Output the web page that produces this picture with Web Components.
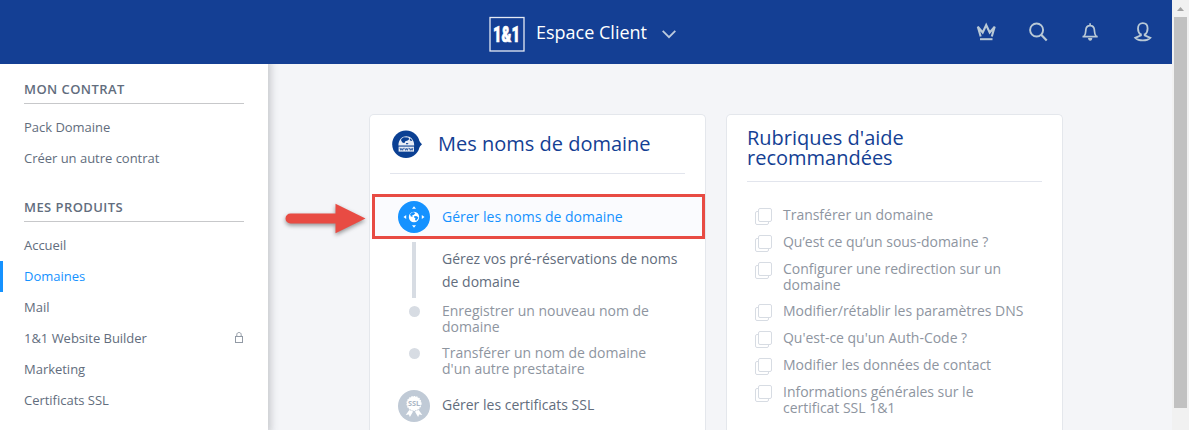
<!DOCTYPE html>
<html lang="fr">
<head>
<meta charset="utf-8">
<title>Espace Client</title>
<style>
html,body{margin:0;height:100%;overflow:hidden}
body{font-family:"Open Sans","Noto Sans",sans-serif;font-size:14px;color:#626d7d;background:#f4f5f8}
</style>
</head>
<body>
<client-app></client-app>
<script>
const define = (name, html) => customElements.define(name, class extends HTMLElement {
  constructor() {
    super();
    const t = document.createElement('template');
    t.innerHTML = html;
    this.attachShadow({ mode: 'open' }).appendChild(t.content.cloneNode(true));
  }
});

define('top-bar', `<style>
:host{display:grid;grid-template-columns:489px 1fr auto;align-items:center;height:64px;background:#143f94;color:#fff;box-sizing:border-box;padding-right:20px}
.brand{grid-column:2;display:flex;align-items:center;font-size:18px;line-height:24px}
.brand svg{display:block;overflow:visible}
.name{margin:0 15px 0 11px;white-space:nowrap}
.chev{margin-top:3px}
.tools{display:flex;gap:32px}
.tools svg{display:block;fill:none;stroke:#b9c9d6;stroke-width:1.9}
</style>
<div class="brand">
<svg width="36" height="38" viewBox="0 0 36 38"><rect x="1" y="4.500" width="34" height="33.500" fill="none" stroke="#e4e9f3" stroke-width="1.300"/><text x="4" y="28.500" style="font-family:Roboto,sans-serif;font-weight:900;font-size:21.500px" textLength="27" lengthAdjust="spacingAndGlyphs" fill="#fff" stroke="#fff" stroke-width=".7">1&amp;1</text></svg>
<span class="name">Espace Client</span>
<svg class="chev" width="14" height="10" viewBox="0 0 14 10" fill="none" stroke="#bccadd" stroke-width="1.800"><path d="M.7 1.800 7 8.200l6.300-6.400"/></svg>
</div>
<div class="tools">
<svg width="20" height="20" viewBox="0 0 20 20"><path d="M4.700 14.500 1.800 4.700 6.700 10.500 10.200 3l3.500 7.500 5-5.800-2.900 9.800" stroke-width="2.100"/><path d="M4 17.200h12.500" stroke-width="2"/></svg>
<svg width="20" height="20" viewBox="0 0 20 20"><circle cx="8.600" cy="8" r="6.500"/><path d="m13.200 12.700 5.500 5.700" stroke-width="2.200"/></svg>
<svg width="20" height="20" viewBox="0 0 20 20"><path d="M2.500 14.600h15.200M4 14.400c1.800-1.900 1.700-4 1.800-6.300.2-3 1.700-4.500 4.300-4.500s4.100 1.500 4.300 4.500c.1 2.300 0 4.400 1.800 6.300M10.100 3.500V1.200" stroke-width="1.700"/><path d="M8 16h4.300c0 1.600-.8 2.700-2.100 2.700S8 17.600 8 16Z" fill="#b9c9d6" stroke="none"/></svg>
<svg width="20" height="20" viewBox="-.8 0 20 20"><path d="M8.100 12.800C6 11.200 5.200 8.700 5.200 6.400c0-3.400 1.800-5.200 4.800-5.200s4.800 1.800 4.800 5.200c0 2.300-.8 4.800-2.900 6.400M8.100 11.500v1.900L2.500 15.800c1.700 1.700 4.500 2.600 7.500 2.600s5.800-.9 7.500-2.600l-5.600-2.400v-1.900" stroke-width="1.800"/></svg>
</div>`);

define('side-group', `<style>
:host{display:block;margin-bottom:25px}
h2{margin:0 24px 8px;height:23px;box-sizing:border-box;border-bottom:1px solid #c7c8ca;font-size:13px;line-height:17px;font-weight:600;letter-spacing:.43px;color:#626d7d;white-space:nowrap}
</style><h2><slot name="title"></slot></h2><slot></slot>`);

define('side-link', `<style>
:host{display:flex;align-items:center;justify-content:space-between;height:31px;box-sizing:border-box;padding:0 25px 2px 24px;font-size:13px;line-height:18px;letter-spacing:-.02px;white-space:nowrap}
:host([active]){color:#1592ff;border-left:3px solid #1592ff;padding-left:21px}
</style><span><slot></slot></span><slot name="icon"></slot>`);

define('side-nav', `<style>
:host{display:block;box-sizing:border-box;width:268px;height:366px;padding-top:17px;background:#fff;position:relative;box-shadow:0 0 7px 3px rgba(70,75,85,.25);clip-path:inset(0 -12px 0 0)}
</style>
<side-group><span slot="title">MON CONTRAT</span><side-link>Pack Domaine</side-link><side-link>Créer un autre contrat</side-link></side-group>
<side-group><span slot="title">MES PRODUITS</span><side-link>Accueil</side-link><side-link active>Domaines</side-link><side-link>Mail</side-link>
<side-link>1&amp;1 Website Builder<svg slot="icon" width="8" height="11" viewBox="0 0 8 11" fill="none" stroke="#929aa5"><rect x=".5" y="4.500" width="7" height="6"/><path d="M1.800 4.500V2.600c0-2.800 4.400-2.800 4.400 0v1.900"/></svg></side-link>
<side-link>Marketing</side-link><side-link>Certificats SSL</side-link></side-group>`);

define('content-card', `<style>
:host{display:block;box-sizing:border-box;width:337px;height:330px;border:1px solid #e4e7ec;border-bottom:0;border-radius:5px 5px 0 0;background:#fff}
header{display:flex;align-items:center;box-sizing:border-box;margin:0 20px;border-bottom:1px solid #e2e5ed;color:#143f94;font-size:20px;line-height:20px;height:var(--head,59px)}
</style><header><slot name="title"></slot></header><slot></slot>`);

define('step-row', `<style>
:host{display:grid;grid-template-columns:32px 1fr;column-gap:12px;box-sizing:border-box;padding-left:28px;white-space:nowrap;line-height:15.700px}
.mark{display:flex;justify-content:center}
</style><span class="mark"><slot name="mark"></slot></span><span><slot></slot></span>`);

define('help-row', `<style>
:host{display:flex;align-items:flex-start;gap:11px;margin:0 0 11px 28px;line-height:16px;letter-spacing:-.02px;color:#8e959f;white-space:nowrap}
:host([double]){margin-bottom:10px}
svg{display:block;flex:none;margin:1px 0 -3px}
</style><svg width="17" height="17" viewBox="0 0 17 17" fill="#fff" stroke="#d7dce3"><rect x=".5" y="3.500" width="13" height="13" rx="1.500"/><rect x="3.500" y=".5" width="13" height="13" rx="1.500"/></svg><span><slot></slot></span>`);

define('domains-card', `<style>
:host{display:block}
.h{display:flex;align-items:center;gap:16px;white-space:nowrap}
svg{display:block}
.hot{margin:20px 0 0 2px;height:45px;width:333px;border:3px solid #e84b43;background:#fafbfe;color:#1592ff;padding-left:23px;align-items:center;line-height:20px;position:relative}
.pre{line-height:23px;margin-top:3px;height:56px}.pre>.t{display:block;padding-top:5px}
.bar{width:4px;height:56px;background:#d7dce3}
.dot{width:11px;height:11px;border-radius:50%;background:#d7dce3;margin-top:3px}
.soft{color:#8e959f;height:42px}.first{margin-top:5px}
.ssl{align-items:center;height:32px;margin-top:3px}
.up{display:block;margin-bottom:2px}
</style>
<content-card><span slot="title" class="h">
<svg width="32" height="30" viewBox="0 0 32 30"><circle cx="16" cy="15.300" r="13.800" fill="#0b4093"/><path d="m29 12 3 3.300-3 3.300Z" fill="#0b4093"/><path d="M8.400 16.600C8.400 4.200 24.200 4.200 24.200 16.600Z" fill="#e8edf6"/><path d="m11.200 10 2.500-1.700 4.500.3 1.200 1.500-1.700 1.400-2.400.7-.8 1.700-1.800-.2-1.500-2ZM20 9.200l2.300 2-1 .8-1.500-.8ZM16 14l2.500.2-.7 1.100h-1.600Z" fill="#0b4093"/><rect x="8.600" y="17.600" width="15.400" height="5" fill="#e8edf6"/><path d="m10 18.900.9 2.400.9-1.800.9 1.800.8-2.400m1.200 0 .9 2.400.9-1.800.9 1.800.8-2.400m1.200 0 .9 2.400.9-1.800.9 1.800.8-2.400" fill="none" stroke="#0b4093" stroke-width=".8"/></svg>
<span>Mes noms de domaine</span></span>
<step-row class="hot"><svg slot="mark" width="32" height="32" viewBox="0 0 32 32"><circle cx="16" cy="16" r="16" fill="#1592ff"/><circle cx="16" cy="16" r="5.200" fill="#fff"/><path d="m12 13 3-2.100 2.300 1.200-1.300 1.700-1.700.5.300 1.500-1.800-.2ZM16.500 15l2.500.2 1.500 1.600-2.300 3-1.200-.8.400-1.700-1.500-1Z" fill="#1592ff"/><path d="m14 7.700 2-2.500 2 2.500Zm0 16.600 2 2.500 2-2.500ZM8.200 14l-2.700 2 2.700 2Zm15.600 0 2.700 2-2.700 2Z" fill="#fff"/></svg>Gérer les noms de domaine</step-row>
<step-row class="pre"><div slot="mark" class="bar"></div><span class="t">Gérez vos pré-réservations de noms<br>de domaine</span></step-row>
<step-row class="soft first"><div slot="mark" class="dot"></div>Enregistrer un nouveau nom de<br>domaine</step-row>
<step-row class="soft"><div slot="mark" class="dot"></div>Transférer un nom de domaine<br>d'un autre prestataire</step-row>
<step-row class="ssl"><svg slot="mark" width="32" height="32" viewBox="0 0 32 32"><circle cx="16" cy="16" r="16" fill="#c0cad6"/><circle cx="16" cy="13.500" r="7" fill="#fff" stroke="#fff" stroke-width="1.200" stroke-dasharray="1.500 1"/><text x="10" y="16" font-family="Open Sans" font-size="6.500" font-weight="700" textLength="12.200" lengthAdjust="spacingAndGlyphs" fill="#aab6c5">SSL</text><path d="m11.300 20-3.600 5 3.100-.4 1.100 2.400 3.200-5.600Zm9.400 0 3.600 5-3.100-.4-1.100 2.400-3.200-5.600Z" fill="#fff"/></svg><span class="up">Gérer les certificats SSL</span></step-row>
</content-card>`);

define('help-card', `<style>
:host{display:block}
content-card{--head:67px}
.h{display:block}
.list{padding-top:25px}
</style>
<content-card><span slot="title" class="h">Rubriques d'aide<br>recommandées</span>
<div class="list"><help-row>Transférer un domaine</help-row><help-row>Qu’est ce qu’un sous-domaine ?</help-row><help-row double>Configurer une redirection sur un<br>domaine</help-row><help-row>Modifier/rétablir les paramètres DNS</help-row><help-row>Qu'est-ce qu'un Auth-Code ?</help-row><help-row>Modifier les données de contact</help-row><help-row double>Informations générales sur le<br>certificat SSL 1&amp;1</help-row></div></content-card>`);

define('scroll-bar', `<style>
:host{display:flex;flex-direction:column;align-items:center;width:17px;height:430px;background:#f1f1f1}
svg{display:block}.thumb{width:13px;height:391px;background:#c1c1c1}
</style><svg width="17" height="17"><path d="m5 11 3.500-4L12 11Z" fill="#a3a3a3"/></svg><div class="thumb"></div>`);

define('pointer-arrow', `<style>
:host{position:absolute;left:282px;top:200px;width:88px;height:40px}
svg{display:block;overflow:visible;filter:drop-shadow(0 2px 2px rgba(0,0,0,.4))}
</style><svg width="88" height="40"><path d="M8.500 13.500h45V3.700L83.500 18.500 53.500 33.300V23.500h-45a5 5 0 0 1 0-10Z" fill="#e84b43"/></svg>`);

define('client-app', `<style>
:host{display:grid;grid-template-columns:1172px 17px;height:430px;overflow:hidden}
.body{display:flex;height:366px;overflow:hidden}
.cards{display:flex;gap:20px;padding:50px 0 0 101px}
</style>
<div><top-bar></top-bar><div class="body"><side-nav></side-nav><main class="cards"><domains-card></domains-card><help-card></help-card></main></div></div>
<scroll-bar></scroll-bar><pointer-arrow></pointer-arrow>`);
</script>
</body>
</html>
